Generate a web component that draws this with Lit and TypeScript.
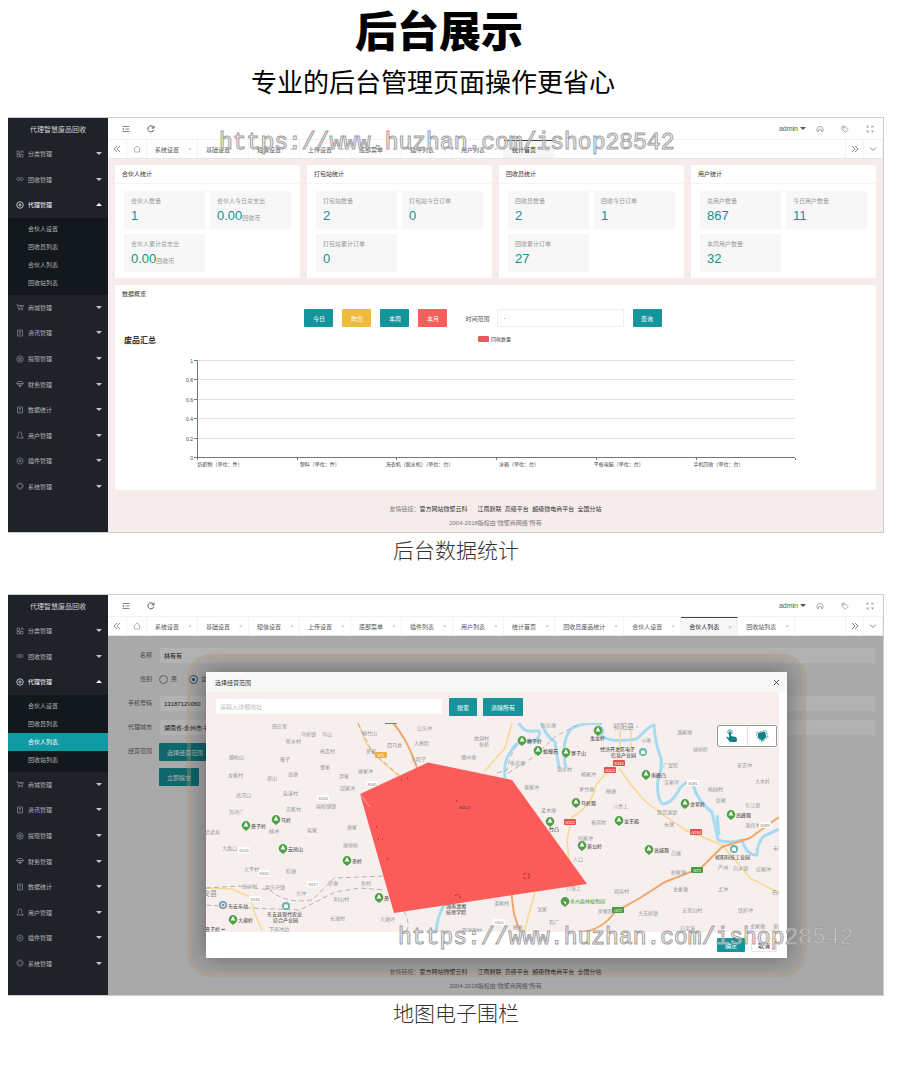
import { LitElement, html, svg, css, nothing } from "lit";
import { customElement, property } from "lit/decorators.js";

const ICONS: Record<string, unknown> = {
  grid: svg`<path d="M2 2h5v5H2zM2 9h5v5H2zM9 9h5v5H9zM9 7l4-5M10 2h4v4"/>`,
  link: svg`<path d="M1 8l3-3h3l2 2 2-2h2l2 3-3 3h-2L8 9l-2 2H4zM5 8h6"/>`,
  target: svg`<circle cx="8" cy="8" r="6.5"/><circle cx="8" cy="8" r="2.2"/>`,
  cart: svg`<path d="M1 3h2l2 8h8l2-6H4M7 7h5"/><circle cx="6" cy="13.5" r="1"/><circle cx="12" cy="13.5" r="1"/>`,
  doc: svg`<path d="M3 2h10v12H3zM5.500 5h5M5.500 8h5M5.500 11h3"/>`,
  star: svg`<circle cx="8" cy="8" r="6.5"/><path d="M8 4.500l1 2.500h2.500l-2 1.700.8 2.600L8 9.800l-2.300 1.500.8-2.600-2-1.700H7z"/>`,
  gem: svg`<path d="M4 3h8l3 4-7 7-7-7zM1 7h14M6 7l2 6 2-6"/>`,
  user: svg`<path d="M8 2a3.500 3.500 0 0 1 3.500 4c0 2-1 3-1 4l3 2v2H2v-2l3-2c0-1-1-2-1-4A3.500 3.500 0 0 1 8 2zM11 14h4"/>`,
  plug: svg`<path d="M8 1.500l5.600 3.200v6.600L8 14.500l-5.600-3.200V4.700z"/><circle cx="8" cy="8" r="2.200"/>`,
  gear: svg`<circle cx="8" cy="8" r="4.700"/><circle cx="8" cy="8" r="6.500" stroke-dasharray="2.500 1.600"/>`,
  menu: svg`<path d="M1 3h14M7 8h8M1 13h14M4 6L1.500 8 4 10"/>`,
  refresh: svg`<path d="M13.500 9.500A6 6 0 1 1 12.500 4M14 1.500V6H9.500" stroke-width="2"/>`,
  left: svg`<path d="M8 2L2 8l6 6M14 2L8 8l6 6"/>`,
  right: svg`<path d="M2 2l6 6-6 6M8 2l6 6-6 6"/>`,
  down: svg`<path d="M2 5l6 6 6-6"/>`,
  home: svg`<path d="M1.500 7.500L8 2l6.500 5.500H13V14H3V7.500z"/>`,
  palette: svg`<path d="M5 13H2.500C0 9 3 3 8 3s8 6 5.500 10H11V9.500M5 13V9.500h6M6 6.500h.5M9.500 6.500h.5"/>`,
  tag: svg`<path d="M2 3l5-1 7.500 7-5.500 5.500L1.500 8z"/><circle cx="5.500" cy="5.500" r="1.200"/>`,
  full: svg`<path d="M2 6V2h4M10 2h4v4M14 10v4h-4M6 14H2v-4M2 2l4 4M14 2l-4 4M14 14l-4-4M2 14l4-4" stroke-dasharray="3 1"/>`,
  close: svg`<path d="M2 2l12 12M14 2L2 14" stroke-width="2"/>`,
};

const icon = (name: string) =>
  html`<svg class="ico" viewBox="0 0 16 16" aria-hidden="true">${ICONS[name]}</svg>`;

const base = css`
  * { box-sizing: border-box; }
  a { color: inherit; text-decoration: none; }
  button { border: 0; padding: 0; margin: 0; background: none; color: inherit; font: inherit; cursor: pointer; }
  svg { display: block; }
  .ico { width: 8px; height: 8px; fill: none; stroke: currentColor; stroke-width: 1.4; }
  .btn { display: inline-flex; align-items: center; justify-content: center; height: 18px; padding: 0 8px; border-radius: 1px; background: #16949b; color: #fff; font-size: 6px; }
`;

const NAV: [string, string][] = [
  ["grid", "分类管理"], ["link", "回收管理"], ["target", "代理管理"], ["cart", "商城管理"],
  ["doc", "资讯管理"], ["star", "提现管理"], ["gem", "财务管理"], ["doc", "数据统计"],
  ["user", "用户管理"], ["plug", "插件管理"], ["gear", "系统管理"],
];
const SUB = ["合伙人设置", "回收员列表", "合伙人列表", "回收站列表"];

@customElement("admin-shell")
export class AdminShell extends LitElement {
  @property({ attribute: false }) tabs: string[] = [];
  @property() current = "";
  static styles = [base, css`
    :host { display: flex; position: relative; border: 1px solid #ccc; border-left: 0; font-size: 6px; color: #555; }
    .side { width: 100px; flex: none; background: #20222a; color: #b4b6b9; }
    .brand { height: 23px; line-height: 23px; text-align: center; font-size: 7px; color: #d2d4d6; }
    .nav { display: flex; flex-direction: column; height: 358px; }
    .item { flex: 1; display: flex; align-items: center; gap: 4px; padding: 0 6px 0 8px; }
    .item .ico { color: #85888d; }
    .item.open, .item.open .ico { color: #fff; }
    .caret { margin-left: auto; border: 3px solid transparent; border-top-color: #c4c6c8; border-bottom: 0; }
    .open .caret { border-top: 0; border-bottom: 3px solid #fff; }
    .sub { background: #12181b; padding: 2px 0 3px; }
    .sub a { display: block; height: 18px; line-height: 18px; padding-left: 20px; }
    .sub .on { background: #109aa3; color: #fff; }
    .main { flex: 1; min-width: 0; display: flex; flex-direction: column; }
    .bar { display: flex; align-items: center; height: 22px; border-bottom: 1px solid #f1f1f1; background: #fff; padding: 0 9px 0 14px; }
    .bar .acts { display: flex; gap: 17px; }
    .bar .right { display: flex; gap: 17px; margin-left: auto; align-items: center; }
    .who { display: flex; align-items: center; gap: 2px; margin-right: -7px; font-size: 7px; }
    .who i { border: 3px solid transparent; border-top-color: #555; border-bottom: 0; }
    .bar .right .ico { color: #888; }
    .tabs { display: flex; height: 19px; border-bottom: 1px solid #e6e6e6; background: #fff; }
    .tabs > button { width: 19px; display: flex; align-items: center; justify-content: center; flex: none; border-right: 1px solid #f4f4f4; }
    .tabs > .home { width: 20px; color: #999; }
    .tabs > .next { margin-left: auto; border-left: 1px solid #f1f1f1; }
    .tab { display: flex; align-items: center; flex: none; padding: 0 5px 0 8px; border-right: 1px solid #f4f4f4; }
    .tab span { margin-left: 9px; width: 4px; color: #bbb; }
    .tab.on { background: #f6f6f6; color: #222; border-top: 1px solid #444; }
    .body { flex: 1; position: relative; display: flex; flex-direction: column; background: #f6eceb; padding: 6px 7px 0; }
    .fill { flex: 1; }
    footer { padding: 12px 0 2px; line-height: 14px; text-align: center; color: #777; white-space: pre; }
    footer div:first-child a { color: #333; }
    :host([dim]) .body { background: #f4f3f3; }
  `];
  render() {
    return html`
      <aside class="side">
        <div class="brand">代理智慧废品回收</div>
        <nav class="nav">
          ${NAV.map(([ic, name]) => html`
            <a href="#" class="item ${name === "代理管理" ? "open" : ""}">${icon(ic)}${name}<i class="caret"></i></a>
            ${name === "代理管理" ? html`<div class="sub">${SUB.map(s => html`<a href="#" class=${s === this.current ? "on" : ""}>${s}</a>`)}</div>` : nothing}`)}
        </nav>
      </aside>
      <div class="main">
        <header class="bar">
          <div class="acts"><button aria-label="收起菜单">${icon("menu")}</button><button aria-label="刷新">${icon("refresh")}</button></div>
          <div class="right">
            <button class="who">admin<i></i></button>
            <button aria-label="主题">${icon("palette")}</button>
            <button aria-label="便签">${icon("tag")}</button>
            <button aria-label="全屏">${icon("full")}</button>
          </div>
        </header>
        <div class="tabs">
          <button aria-label="向左">${icon("left")}</button>
          <button class="home" aria-label="主页">${icon("home")}</button>
          ${this.tabs.map(t => html`<a href="#" class="tab ${t === (this.current || "统计首页") ? "on" : ""}">${t}<span>×</span></a>`)}
          <button class="next" aria-label="向右">${icon("right")}</button>
          <button aria-label="更多">${icon("down")}</button>
        </div>
        <div class="body">
          <div class="fill"><slot></slot></div>
          <footer><div>友情链接：<a href="#">官方网站微聚云科</a>      <a href="#">江南默联</a>  <a href="#">高级平台</a>  <a href="#">超级微电商平台</a>  <a href="#">全国分站</a></div><div>2004-2018版权由“微聚商网络”所有</div></footer>
          <slot name="over"></slot>
        </div>
      </div>`;
  }
}

type Stat = [string, string, string?];
const CARDS: [string, Stat[]][] = [
  ["合伙人统计", [["合伙人数量", "1"], ["合伙人今日总支出", "0.00", "回收币"], ["合伙人累计总支出", "0.00", "回收币"]]],
  ["打包站统计", [["打包站数量", "2"], ["打包站今日订单", "0"], ["打包站累计订单", "0"]]],
  ["回收员统计", [["回收员数量", "2"], ["回收今日订单", "1"], ["回收累计订单", "27"]]],
  ["用户统计", [["总用户数量", "867"], ["今日用户数量", "11"], ["本周用户数量", "32"]]],
];
const CATS = ["纺织物（单位：件）", "塑料（单位：件）", "洗衣机（脱水机）（单位：台）", "冰箱（单位：台）", "平板电脑（单位：台）", "手机回收（单位：台）"];

@customElement("stats-view")
export class StatsView extends LitElement {
  static styles = [base, css`
    :host { display: block; }
    .cards { display: grid; grid-template-columns: repeat(4, 1fr); gap: 7px; margin-bottom: 7px; }
    .card { background: #fff; border-radius: 1px; }
    h3 { margin: 0; padding-left: 7px; height: 19px; line-height: 19px; font-size: 6px; font-weight: 400; color: #333; }
    .cards h3 { border-bottom: 1px solid #f5f5f5; }
    .grid { display: grid; grid-template-columns: 1fr 1fr; gap: 5px; padding: 7px 9px 6px; }
    .stat { height: 38px; padding: 6px 0 0 7px; background: #f7f7f7; color: #999; }
    .name { line-height: 8px; }
    .num { margin-top: 3px; line-height: 16px; white-space: nowrap; }
    .num b { font-size: 13px; font-weight: 400; color: #16928c; }
    form { display: flex; justify-content: center; align-items: center; gap: 9px; padding: 5px 25px 0 0; }
    .btn { width: 29px; padding: 0; }
    .y { background: #eebb40; }
    .r { background: #f75f5d; }
    label { margin-left: 9px; }
    input { width: 127px; height: 18px; border: 1px solid #eee; padding: 0 6px; font: inherit; margin-left: -2px; }
    .chart { width: 100%; font-size: 5px; fill: #444; }
    .chart .t { font-size: 8px; font-weight: 700; fill: #333; }
    .chart .g { stroke: #e2e2e2; }
    .chart .a { stroke: #777; }
  `];
  render() {
    return html`
      <div class="cards">${CARDS.map(([t, items]) => html`
        <section class="card"><h3>${t}</h3><div class="grid">
          ${items.map(([n, v, u]) => html`<div class="stat"><div class="name">${n}</div><div class="num"><b>${v}</b>${u ?? nothing}</div></div>`)}
        </div></section>`)}</div>
      <section class="card">
        <h3>数据概览</h3>
        <form>
          <button type="button" class="btn">今日</button><button type="button" class="btn y">昨日</button>
          <button type="button" class="btn">本周</button><button type="button" class="btn r">本月</button>
          <label for="range">时间范围</label><input id="range" placeholder="-">
          <button type="button" class="btn">查询</button>
        </form>
        <svg class="chart" viewBox="115 327 761 163" role="img" aria-label="废品汇总">
          <text class="t" x="124" y="343">废品汇总</text>
          <rect x="478" y="336" width="11" height="6" rx="1" fill="#e25c5c"/>
          <text x="491" y="341">回收数量</text>
          ${["1", "0.8", "0.6", "0.4", "0.2", "0"].map((v, i) => {
            const y = 360.5 + Math.round(i * 19.4);
            return svg`<path class=${v === "0" ? "a" : "g"} d="M197 ${y}H795"/><path class="a" d="M194 ${y}h3"/><text x="193" y=${y + 2} text-anchor="end">${v}</text>`;
          })}
          <path class="a" d="M197.500 360V458"/>
          ${[0, 1, 2, 3, 4, 5, 6].map(i => svg`<path class="a" d="M${Math.round(197 + i * 99.7) + 0.5} 458v2"/>`)}
          ${CATS.map((c, i) => svg`<text x=${220 + i * 99.7} y="466" text-anchor="middle">${c}</text>`)}
        </svg>
      </section>`;
  }
}

/* Place names: left edge, vertical centre, text */
const PLACES: [number, number, string][] = [
  [272, 726, "田庄里"], [301, 734, "马桥镇"], [322, 734, "马山"], [362, 733, "楠竹山"], [417, 728, "山头冲"],
  [286, 741, "陈水村"], [387, 745, "四马井"], [414, 743, "大屋院"], [366, 751, "夏家"], [320, 751, "梅瓦村"],
  [229, 757, "细柏山"], [280, 759, "庵子"], [320, 767, "曹家"], [411, 759, "大院子"], [228, 775, "龙家村"],
  [267, 778, "燕山"], [288, 774, "高塘"], [339, 776, "尹家"], [358, 771, "塘家冲"], [340, 788, "邱家冲"],
  [236, 795, "燕河口"], [283, 793, "盐溪村"], [286, 809, "芭蕉村"], [316, 806, "端桥铺镇"], [229, 812, "万坪广"],
  [205, 832, "北君寿"], [269, 831, "楠冲"], [307, 830, "易家"], [347, 827, "唐家"], [343, 845, "塘坝桥"],
  [222, 848, "大路口"], [244, 869, "大平村"], [286, 871, "町塘"], [242, 886, "高沙村"], [265, 887, "井头圩镇"],
  [296, 893, "大冲"], [328, 883, "罗塘"], [361, 883, "新村"], [334, 899, "阿山村"], [330, 918, "长滩村"],
  [380, 919, "大塘坪"], [269, 929, "下南冲边"], [474, 738, "曲洞村"], [479, 744, "板桥"], [461, 757, "槽叶塘"],
  [541, 725, "包头塘"], [510, 763, "鱼花塘"], [557, 769, "滴水村"], [581, 774, "杨家冲"], [524, 787, "曾家冲"],
  [579, 789, "茅竹塘"], [606, 791, "杨塘"], [541, 810, "梁木塘"], [613, 806, "八世上"], [591, 822, "春岗坊"],
  [641, 740, "斗塘"], [677, 732, "潘家坳"], [693, 749, "球树岭"], [663, 765, "广富院"], [664, 782, "吴家坪"],
  [737, 765, "来正冲"], [755, 781, "大木岭"], [708, 789, "梅园村"], [716, 800, "赵家"], [745, 805, "东江源"],
  [657, 812, "观音滩镇"], [664, 824, "长塘"], [745, 825, "潘官冲"], [578, 838, "何家冲"], [573, 859, "人口"],
  [671, 853, "白塘"], [671, 872, "柏家塘"], [718, 867, "芦洲"], [733, 868, "白水镇"], [756, 869, "应家冲"],
  [566, 888, "八埠上"], [614, 891, "周庆村"], [673, 889, "金象塘"], [718, 889, "孟冲"], [494, 903, "潘家村"],
  [537, 909, "沈家"], [598, 911, "廖家院"], [638, 913, "大芝桥镇"], [682, 910, "五里山村"], [738, 910, "铁炉冲"],
  [549, 922, "石广"], [513, 927, "杨家"], [680, 928, "白泥溪"], [750, 926, "金家塘"], [462, 930, "观塘塘村"],
  [773, 848, "宋家"], [772, 892, "石山"], [773, 926, "黄家"],
];
const PINS: [number, number, string][] = [
  [522, 740, "狮子岭"], [538, 750, "蛤蟆石"], [566, 752, "寨子山"], [598, 730, ""], [646, 774, "南峰凸"],
  [246, 825, "鼻子岭"], [276, 819, "马岭"], [283, 848, "云凤山"], [347, 860, "贵岭"], [379, 897, "鼻"], [233, 919, "大旗岭"],
  [576, 802, "马岭观"], [619, 820, "龙王殿"], [685, 803, "金紫岭"], [731, 814, "高峰观"], [550, 821, ""],
  [582, 845, "黄公岭"], [649, 849, "高城观"],
];
const BADGES: [number, number, string, string][] = [
  [619, 763, "S345", "#e2524b"], [610, 770, "G322", "#e2524b"], [570, 822, "G322", "#e2524b"], [696, 832, "G234", "#e2524b"],
  [381, 755, "S71", "#e8b339"], [697, 870, "G72", "#4a9a44"], [618, 910, "G72", "#4a9a44"],
  [372, 784, "X045", "#fff"], [323, 798, "X034", "#fff"], [244, 850, "X020", "#fff"], [264, 873, "X020", "#fff"],
  [313, 884, "X017", "#fff"], [255, 899, "X034", "#fff"], [499, 922, "Y001", "#fff"], [693, 783, "X081", "#fff"], [765, 825, "X083", "#fff"],
];

@customElement("fence-map")
export class FenceMap extends LitElement {
  static styles = css`
    * { box-sizing: border-box; }
    :host { display: block; position: relative; }
    svg { display: block; width: 100%; }
    .map { background: #f7efed; font-size: 5px; fill: none; }
    .w { stroke: #a6dbf2; stroke-width: 3; stroke-linejoin: round; }
    .y { stroke: #f8d98f; stroke-width: 1.5; }
    .o { stroke: #eea86a; stroke-width: 2; }
    .d { stroke: #999; stroke-width: 0.7; stroke-dasharray: 5 3; }
    .p { fill: #92989e; }
    .n { fill: #333; }
    .g { fill: #4f9f45; }
    .c { fill: #66b6ad; }
    .b { font-size: 4px; }
    .big { fill: #8f969c; font-size: 7px; }
    .tools { position: absolute; top: 2px; right: 2px; display: flex; width: 60px; height: 22px; background: #fff; border: 1px solid #999; border-radius: 2px; }
    button { flex: 1; border: 0; padding: 0; background: none; display: grid; place-items: center; }
    button + button { border-left: 1px solid #ddd; }
    button svg { width: 14px; height: 14px; }
  `;
  render() {
    return html`
      <svg class="map" viewBox="206 723 573 209" role="img" aria-label="经营范围地图">
        <path class="w" d="M519 723Q524 733 534 731T536 741Q515 740 512 750Q503 760 505 778M541 723Q546 736 555 742L559 768M566 768Q560 740 572 728Q584 722 602 724M598 727Q606 728 601 736Q612 743 637 739Q650 725 654 725Q655 744 661 758Q662 772 658 780Q656 795 662 804Q672 804 680 788Q688 779 693 783Q696 800 712 812L718 840Q730 844 742 840Q747 856 757 855Q757 843 764 836L779 829M447 900Q437 915 436 932"/>
        <path class="w" d="M717 815l2 20M764 836l13-6" stroke-width="5"/>
        <path class="y" d="M358 723L366 743 377 757 405 782M512 723L505 748 484 772M620 730V752M631 730V752M619 768L631 785 646 802Q665 817 687 831L722 845 735 860 750 878 779 893M612 766L596 785Q592 806 572 817L567 840 570 870M535 892L524 932M206 888L232 889 250 897 255 914 262 930"/>
        <path class="o" d="M393 723Q407 738 417 768M511 890L514 914 520 932M582 932Q602 930 615 912L640 898 665 882 701 868 722 847 750 838 779 817"/>
        <path d="M385 723h12" stroke="#4a9a44" stroke-width="2"/>
        <path class="d" d="M358 723L372 752 405 780M497 773L507 770Q511 750 522 738M508 773L532 758 556 736 579 724M206 905L250 908 300 910 335 892 360 888 385 890M206 888L240 886 270 890Q285 904 312 900L334 878 385 876M404 911Q411 925 406 932"/>
        ${PLACES.map(([x, y, t]) => svg`<text class="p" x=${x} y=${y + 2}>${t}</text>`)}
        ${BADGES.map(([x, y, t, f]) => svg`<rect x=${x - 6} y=${y - 3} width="12" height="6" rx="1" fill=${f}/><text class="b" x=${x} y=${y + 1.5} text-anchor="middle" fill=${f === "#fff" ? "#777" : "#fff"}>${t}</text>`)}
        ${PINS.map(([x, y, t]) => svg`<path class="g" d="M${x} ${y + 6}l-3-2.500a4.300 4.300 0 1 1 6 0z"/><path d="M${x} ${y - 3}l2.400 4.500h-4.800z" fill="#fff"/><text class="n" x=${x + 5} y=${y + 3}>${t}</text>`)}
        <text class="big" x="613" y="729">祁阳县 ◦</text><text class="big" x="203" y="896">安县</text>
        <text class="n" x="590" y="740">鬼龙岭</text>
        <text class="n" x="600" y="751">经济开发区电子</text><text class="n" x="611" y="757">信息产业园</text>
        <text class="n" x="549" y="831">竹凸</text>
        <text class="n" x="228" y="908">东安东站</text><circle cx="223" cy="905" r="4" fill="#7b95ab"/><circle cx="223" cy="905" r="2" stroke="#fff"/>
        <text class="n" x="267" y="916">东安县现代农业</text><text class="n" x="273" y="922">综合产业园</text>
        <text class="n" x="446" y="908">湖南潇湘</text><text class="n" x="446" y="914">技师学院</text>
        <text class="n" x="715" y="859">祁阳科技工业园</text>
        <text class="g" x="570" y="903">永州森林植物园</text>
        <text class="n" x="205" y="931">鼻子岭 ▪▪</text>
        ${[[643, 752], [286, 906], [734, 849]].map(([x, y]) => svg`<circle class="c" cx=${x} cy=${y} r="4"/><path d="M${x - 2} ${y + 2}v-3l2-1 2 1v3z" fill="#fff"/>`)}
        <path class="g" d="M565 907l-3-2.500a4.300 4.300 0 1 1 6 0z"/><path d="M563 901l3 1 0 3z" fill="#fff"/>
        <path d="M360 794L428 762.500 512 780 587 884 394 913z" fill="#fb5c5a"/>
        <path d="M360 794l10 13" stroke="#fdd" stroke-width=".6"/>
        <text class="n b" x="459" y="809">X04-2</text>
        <path d="M401 780h1M407 778h1M456 801h1M376 827h1M378 839h1M382 839h1M387 859h1" stroke="#6d2020"/>
        <circle cx="526.500" cy="876" r="3" stroke="#6d2020" stroke-width=".7" stroke-dasharray="3 2"/>
        <path d="M455 896q2-3 5 0v2" stroke="#6d2020" stroke-width=".7" stroke-dasharray="2 1"/>
      </svg>
      <div class="tools">
        <button aria-label="拖动地图"><svg viewBox="0 0 14 14"><circle cx="5" cy="3" r="2.200" fill="none" stroke="#168087" stroke-width=".8"/><path d="M4 3q1-1.500 2 0v4l5 1q1.500 1 .5 5H5L1 8q1-1 3 1z" fill="#168087"/></svg></button>
        <button aria-label="绘制多边形"><svg viewBox="0 0 14 14"><path d="M3 4l7-1.500L11.500 8 7 12 3 8.500z" fill="#168087"/><path d="M1.500 3.500l9.500-2 2 7-6 4.500-5-4.500z" fill="none" stroke="#168087" stroke-width=".7" stroke-dasharray="2 1"/></svg></button>
      </div>`;
  }
}

@customElement("partner-form")
export class PartnerForm extends LitElement {
  static styles = [base, css`
    form { display: grid; grid-template-columns: 37px 1fr; column-gap: 7px; row-gap: 7px; padding-top: 5px; }
    label, .lab { line-height: 17px; text-align: right; color: #666; }
    input[type="text"] { width: 100%; height: 17px; border: 1px solid #f4f4f4; background: #fff; padding: 0 4px; font: inherit; color: #222; }
    .radios { display: flex; align-items: center; gap: 3px; }
    .radios label { margin-right: 9px; }
    input[type="radio"] { appearance: none; width: 9px; height: 9px; margin: 0; border: 1px solid #888; border-radius: 50%; }
    input[type="radio"]:checked { border-color: #2b6d8a; background: radial-gradient(circle, #2b6d8a 1px, transparent 2px); }
    .btn { justify-self: start; }
    .btn.go { grid-column: 2; }
  `];
  render() {
    return html`<form>
      <label for="name">名称</label><input id="name" type="text" value="林有有">
      <span class="lab">性别</span>
      <div class="radios"><input id="m" type="radio" name="sex"><label for="m">男</label><input id="f" type="radio" name="sex" checked><label for="f">女</label></div>
      <label for="tel">手机号码</label><input id="tel" type="text" value="13187129060">
      <label for="city">代理城市</label><input id="city" type="text" value="湖南省-永州市-祁阳县">
      <span class="lab">经营范围</span><button type="button" class="btn">选择经营范围</button>
      <button type="button" class="btn go">立即提交</button>
    </form>`;
  }
}

@customElement("range-dialog")
export class RangeDialog extends LitElement {
  static styles = [base, css`
    :host { position: absolute; inset: 0; background: rgba(0, 0, 0, 0.3); }
    .dlg { position: absolute; top: 36px; left: 98px; right: 96px; background: #fff; box-shadow: 0 0 20px rgba(0, 0, 0, 0.35); }
    .halo { position: absolute; top: 18px; bottom: 18px; left: 79px; right: 77px; border: 4px solid rgba(196, 164, 130, 0.3); border-radius: 24px; background: rgba(0, 0, 0, 0.06); }
    .head { display: flex; align-items: center; justify-content: space-between; height: 20px; padding: 0 7px 0 9px; background: #f8f8f8; color: #333; }
    .head .ico { width: 7px; height: 7px; }
    .body { background: #f7eeed; margin-right: 8px; padding-top: 6px; }
    .row { display: flex; gap: 6px; padding-left: 9px; margin-bottom: 7px; }
    input { width: 228px; height: 17px; border: 1px solid #f3f3f3; padding: 0 4px; font: inherit; }
    input::placeholder { color: #bbb; }
    .foot { display: flex; justify-content: flex-end; gap: 6px; align-items: center; height: 26px; padding-right: 10px; }
    .foot .btn { height: 14px; }
    .foot .no { background: #fff; border: 1px solid #e8e8e8; color: #333; padding: 0 6px; }
  `];
  render() {
    return html`<div class="halo"></div>
      <div class="dlg" role="dialog" aria-label="选择经营范围">
        <div class="head">选择经营范围<button aria-label="关闭">${icon("close")}</button></div>
        <div class="body">
          <div class="row"><input aria-label="详细地址" placeholder="请输入详细地址"><button class="btn">搜索</button><button class="btn">清除所有</button></div>
          <fence-map></fence-map>
        </div>
        <div class="foot"><button class="btn">确定</button><button class="btn no">取消</button></div>
      </div>`;
  }
}

const TABS = ["系统设置", "基础设置", "短信设置", "上传设置", "底部菜单", "插件列表", "用户列表", "统计首页"];

@customElement("app-root")
export class AppRoot extends LitElement {
  static styles = css`
    :host { display: block; padding: 10px 16px 0 8px; background: #fff; font-family: "Liberation Sans", "Noto Sans CJK SC", sans-serif; color: #000; }
    h1 { margin: 0 0 10px; padding-right: 14px; font-size: 42px; line-height: 46px; font-weight: 900; text-align: center; }
    .lead { margin: 0 0 17px; padding-right: 26px; font-size: 26px; line-height: 34px; font-weight: 400; text-align: center; }
    figure { margin: 0 0 25px; position: relative; }
    figcaption { padding-left: 20px; font-size: 21px; line-height: 36px; font-weight: 300; text-align: center; color: #333; }
    .short { min-height: 400px; }
    .mark { position: absolute; top: 12px; left: 211px; font: 23px/28px "Liberation Mono", monospace; color: rgba(255, 255, 255, 0.5); -webkit-text-stroke: 1px #a0a0a0; pointer-events: none; }
    .low { top: 330px; left: 390px; }
  `;
  render() {
    return html`
      <h1>后台展示</h1>
      <p class="lead">专业的后台管理页面操作更省心</p>
      <figure>
        <admin-shell .tabs=${TABS}><stats-view></stats-view></admin-shell>
        <span class="mark">https://www.huzhan.com/ishop28542</span>
        <figcaption>后台数据统计</figcaption>
      </figure>
      <figure>
        <admin-shell class="short" dim current="合伙人列表" .tabs=${[...TABS, "回收员废品统计", "合伙人设置", "合伙人列表", "回收站列表"]}>
          <partner-form></partner-form>
          <range-dialog slot="over"></range-dialog>
        </admin-shell>
        <span class="mark low">https://www.huzhan.com/ishop28542</span>
        <figcaption>地图电子围栏</figcaption>
      </figure>`;
  }
}
